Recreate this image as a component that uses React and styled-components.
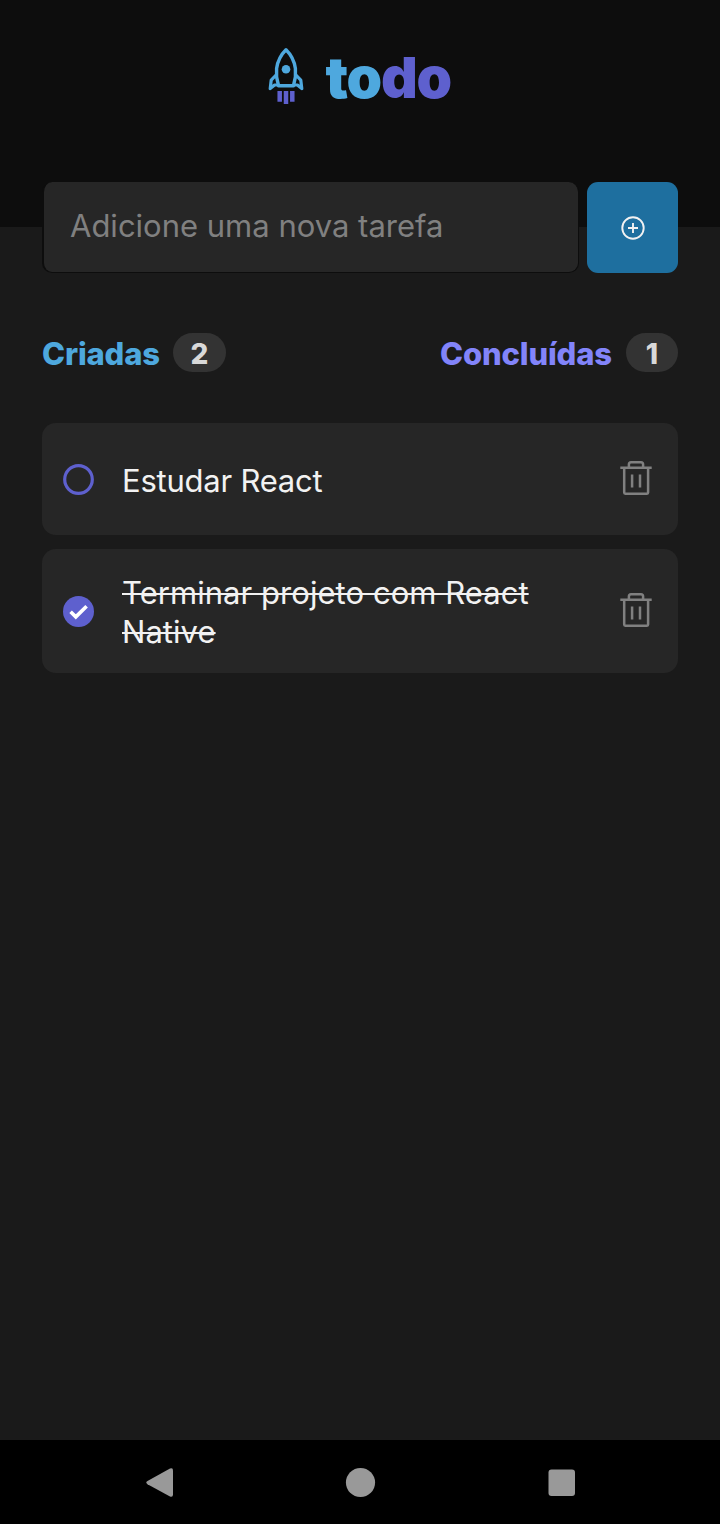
import React from "react";
import styled, { createGlobalStyle } from "styled-components";

const GlobalStyle = createGlobalStyle`
  * { box-sizing: border-box; }
  body {
    margin: 0;
    background: #1a1a1a;
    font-family: Inter, "Open Sans", sans-serif;
  }
`;

const Screen = styled.div`
  width: 720px;
  height: 1524px;
  display: flex;
  flex-direction: column;
  background: #1a1a1a;
  overflow: hidden;
`;

const Header = styled.header`
  height: 227px;
  padding-top: 46px;
  display: flex;
  justify-content: center;
  align-items: flex-start;
  gap: 22px;
  background: #0d0d0d;
`;

const Rocket = styled.svg`
  width: 36px;
  height: 58px;
  margin-top: 1px;
`;

const Wordmark = styled.h1`
  width: 127px;
  margin: 0;
  font-size: 57px;
  line-height: 64px;
  font-weight: 900;
  letter-spacing: ${(p) => p.$tracking}px;
  white-space: nowrap;
  color: #4ea8de;
`;

const WordmarkEnd = styled.span`
  color: #5e60ce;
`;

const Main = styled.main`
  flex: 1;
  padding: 0 42px;
  margin-top: -45px;
`;

const Form = styled.form`
  display: flex;
  gap: 8px;
  height: 91px;
`;

const Input = styled.input`
  flex: 1;
  min-width: 0;
  padding: 0 26px 3px;
  border: solid #0d0d0d;
  border-width: 0 1px 1px 2px;
  border-radius: 10px;
  outline: none;
  background: #262626;
  color: #f2f2f2;
  font-family: inherit;
  font-size: 31px;
  letter-spacing: ${(p) => p.$tracking}px;
  &::placeholder {
    color: #808080;
    opacity: 1;
  }
`;

const AddButton = styled.button`
  width: 91px;
  padding: 0;
  border: 0;
  border-radius: 11px;
  background: #1e6f9f;
  display: flex;
  align-items: center;
  justify-content: center;
`;

const Summary = styled.div`
  display: flex;
  justify-content: space-between;
  margin-top: 60px;
`;

const Counter = styled.div`
  display: flex;
  align-items: center;
  height: 39px;
`;

const CounterLabel = styled.span`
  width: ${(p) => p.$width}px;
  color: ${(p) => p.$color};
  font-size: 31px;
  line-height: 39px;
  font-weight: 800;
  letter-spacing: ${(p) => p.$tracking}px;
  white-space: nowrap;
  padding-top: 1px;
`;

const Badge = styled.span`
  width: ${(p) => p.$width}px;
  height: 39px;
  margin-left: 14px;
  border-radius: 20px;
  background: #333;
  color: #d9d9d9;
  font-size: 28px;
  line-height: 42px;
  font-weight: 800;
  text-align: center;
`;

const List = styled.ul`
  display: flex;
  flex-direction: column;
  gap: 14px;
  margin: 51px 0 0;
  padding: 0;
  list-style: none;
`;

const Task = styled.li`
  display: flex;
  align-items: center;
  min-height: 112px;
  padding: 24px 26px 22px 21px;
  border-radius: 14px;
  background: #262626;
`;

const Check = styled.svg`
  width: 31px;
  height: 31px;
  flex: none;
  margin-bottom: 2px;
`;

const TaskText = styled.span`
  flex: 1;
  margin: 0 65px 0 28px;
  color: #f2f2f2;
  font-size: 31px;
  line-height: 39px;
  letter-spacing: ${(p) => p.$tracking}px;
  text-decoration: ${(p) => (p.$done ? "line-through" : "none")};
  text-decoration-thickness: 2px;
`;

const Trash = styled.svg`
  width: 32px;
  height: 36px;
  flex: none;
  margin-bottom: 5px;
`;

const NavBar = styled.nav`
  height: 84px;
  display: flex;
  align-items: center;
  justify-content: space-between;
  padding: 0 144px;
  background: #000;
`;

const NavIcon = styled.svg`
  width: 32px;
  height: 32px;
  fill: #999;
`;

const tasks = [
  { text: "Estudar React", done: false, tracking: -0.23 },
  { text: "Terminar projeto com React Native", done: true, tracking: 0.05 },
];

function CheckIcon({ done }) {
  return (
    <Check viewBox="0 0 31 31">
      {done ? (
        <>
          <circle cx="15.5" cy="15.5" r="15.5" fill="#5e60ce" />
          <path d="M7.6 15.8L12.8 20.9L23.6 10.2" fill="none" stroke="#fff" strokeWidth="3.6" />
        </>
      ) : (
        <circle cx="15.5" cy="15.5" r="13.8" fill="none" stroke="#5e60ce" strokeWidth="3.2" />
      )}
    </Check>
  );
}

function TrashIcon() {
  return (
    <Trash viewBox="0 0 32 36" fill="none" stroke="#808080" strokeWidth="2.5" strokeLinejoin="round">
      <path d="M.3 7.7H31.7M4.2 7.7V32.6Q4.2 33.7 5.3 33.7H27Q28.1 33.7 28.1 32.6V7.7M8.9 7.5V4.5Q8.9 2.2 11 2.2H21Q23.1 2.2 23.1 4.5V7.5M12.1 14.5V27.5M20 14.5V27.5" />
    </Trash>
  );
}

export default function App() {
  return (
    <Screen>
      <GlobalStyle />
      <Header>
        <Rocket viewBox="0 0 36 58" fill="none">
          <path
            d="M18 2.8C13.5 7.2 9.6 14.5 8.6 21.5V30L10.6 38.8H25.4L27.4 30V21.5C26.4 14.5 22.5 7.2 18 2.8Z"
            stroke="#4ea8de"
            strokeWidth="3.4"
            strokeLinejoin="round"
          />
          <path
            d="M8.6 27.5L3.2 33.2L2.2 41.6L6.6 38H10.6M27.4 27.5L32.8 33.2L33.8 41.6L29.4 38H25.4"
            stroke="#4ea8de"
            strokeWidth="3.2"
            strokeLinejoin="round"
          />
          <circle cx="18" cy="22.3" r="4.3" fill="#4ea8de" />
          <path d="M11.7 44V54.7M18 44V57M24.3 44V54.7" stroke="#5e60ce" strokeWidth="4.5" />
        </Rocket>
        <Wordmark $tracking={-1.2}>
          to<WordmarkEnd>do</WordmarkEnd>
        </Wordmark>
      </Header>
      <Main>
        <Form>
          <Input placeholder="Adicione uma nova tarefa" $tracking={0} />
          <AddButton type="button" aria-label="Adicionar">
            <svg width="24" height="24" viewBox="0 0 24 24" fill="none" stroke="#f2f2f2" strokeWidth="1.9">
              <circle cx="12" cy="12" r="10.7" />
              <path d="M12 7V17M7 12H17" />
            </svg>
          </AddButton>
        </Form>
        <Summary>
          <Counter>
            <CounterLabel $color="#4ea8de" $width={117} $tracking={-0.15}>Criadas</CounterLabel>
            <Badge $width={53}>2</Badge>
          </Counter>
          <Counter>
            <CounterLabel $color="#8284fa" $width={172} $tracking={-0.15}>Concluídas</CounterLabel>
            <Badge $width={52}>1</Badge>
          </Counter>
        </Summary>
        <List>
          {tasks.map((t) => (
            <Task key={t.text}>
              <CheckIcon done={t.done} />
              <TaskText $done={t.done} $tracking={t.tracking}>{t.text}</TaskText>
              <TrashIcon />
            </Task>
          ))}
        </List>
      </Main>
      <NavBar>
        <NavIcon viewBox="0 0 32 32">
          <path d="M3.5 15L26 2.5Q29 1.3 29 4.5V28.5Q29 31.5 26 30.5L3.5 18.2Q1 16.5 3.5 15Z" />
        </NavIcon>
        <NavIcon viewBox="0 0 32 32">
          <circle cx="16.5" cy="16.5" r="14.6" />
        </NavIcon>
        <NavIcon viewBox="0 0 32 32">
          <rect x="4.5" y="3.4" width="26.5" height="26.5" rx="3" />
        </NavIcon>
      </NavBar>
    </Screen>
  );
}
